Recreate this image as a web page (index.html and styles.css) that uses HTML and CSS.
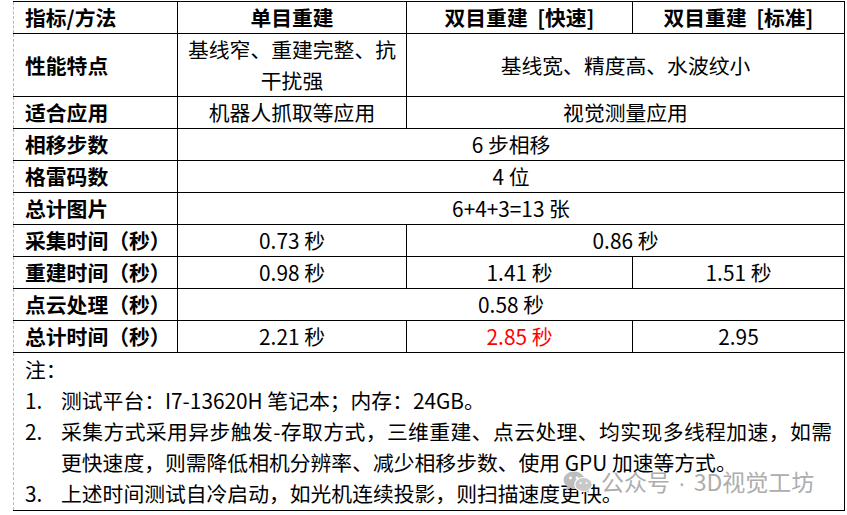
FILE: index.html
```html
<!DOCTYPE html>
<html lang="zh-CN">
<head>
<meta charset="utf-8">
<title>重建方法对比</title>
<link rel="stylesheet" href="styles.css">
</head>
<body>
<div class="sheet">
  <table class="grid">
    <colgroup>
      <col class="c1"><col class="c2"><col class="c3"><col class="c4">
    </colgroup>
    <tr class="row">
      <th class="label">指标/方法</th>
      <th>单目重建</th>
      <th>双目重建&nbsp;&nbsp;[快速]</th>
      <th>双目重建&nbsp;&nbsp;[标准]</th>
    </tr>
    <tr>
      <th class="label">性能特点</th>
      <td>基线窄、重建完整、抗干扰强</td>
      <td colspan="2">基线宽、精度高、水波纹小</td>
    </tr>
    <tr class="row">
      <th class="label">适合应用</th>
      <td>机器人抓取等应用</td>
      <td colspan="2">视觉测量应用</td>
    </tr>
    <tr class="row">
      <th class="label">相移步数</th>
      <td colspan="3">6 步相移</td>
    </tr>
    <tr class="row">
      <th class="label">格雷码数</th>
      <td colspan="3">4 位</td>
    </tr>
    <tr class="row">
      <th class="label">总计图片</th>
      <td colspan="3">6+4+3=13 张</td>
    </tr>
    <tr class="row">
      <th class="label">采集时间（秒）</th>
      <td>0.73 秒</td>
      <td colspan="2">0.86 秒</td>
    </tr>
    <tr class="row">
      <th class="label">重建时间（秒）</th>
      <td>0.98 秒</td>
      <td>1.41 秒</td>
      <td>1.51 秒</td>
    </tr>
    <tr class="row">
      <th class="label">点云处理（秒）</th>
      <td colspan="3">0.58 秒</td>
    </tr>
    <tr class="row">
      <th class="label">总计时间（秒）</th>
      <td>2.21 秒</td>
      <td class="hot">2.85 秒</td>
      <td>2.95</td>
    </tr>
    <tr>
      <td colspan="4" class="notes">
        <div class="note-title">注：</div>
        <div class="note"><span class="num">1.</span><div class="body">测试平台：I7-13620H 笔记本；内存：24GB。</div></div>
        <div class="note"><span class="num">2.</span><div class="body"><span class="just">采集方式采用异步触发-存取方式，三维重建、点云处理、均实现多线程加速，如需</span><span class="line">更快速度，则需降低相机分辨率、减少相移步数、使用 GPU 加速等方式。</span></div></div>
        <div class="note"><span class="num">3.</span><div class="body">上述时间测试自冷启动，如光机连续投影，则扫描速度更快。</div></div>
      </td>
    </tr>
  </table>
  <div class="watermark">
    <svg class="wm-icon" width="30" height="22" viewBox="0 0 30 22">
      <ellipse cx="11" cy="9" rx="10.5" ry="8.5" fill="#bdbdbd"/>
      <path d="M4 15 L3 20 L8 16.5 Z" fill="#bdbdbd"/>
      <circle cx="7.5" cy="7" r="1.4" fill="#fff"/>
      <circle cx="14" cy="7" r="1.4" fill="#fff"/>
      <ellipse cx="20.5" cy="13.5" rx="8.8" ry="7" fill="#c9c9c9" stroke="#fff" stroke-width="1.2"/>
      <path d="M25 19 L27 22 L22.5 20 Z" fill="#c9c9c9"/>
      <circle cx="17.5" cy="12" r="1.1" fill="#fff"/>
      <circle cx="23.5" cy="12" r="1.1" fill="#fff"/>
    </svg>
    <span class="wm-text">公众号<span class="wm-dot">·</span>3D视觉工坊</span>
  </div>
</div>
</body>
</html>
```
FILE: styles.css
```css
html, body {
  margin: 0;
  padding: 0;
  background: #ffffff;
}

body {
  font-family: "Noto Sans CJK SC", "Liberation Sans", sans-serif;
  color: #000000;
  font-size: 20.8px;
}

.sheet {
  position: relative;
  width: 847px;
  height: 515px;
  padding: 1px 0 0 13px;
  box-sizing: border-box;
}

.grid {
  border-collapse: collapse;
  table-layout: fixed;
  width: 831px;
}

.c1 { width: 164px; }
.c2 { width: 229px; }
.c3 { width: 226px; }
.c4 { width: 212px; }

.grid th,
.grid td {
  border: 1px solid #000000;
  padding: 0;
  line-height: 31px;
  text-align: center;
  vertical-align: middle;
  font-weight: 400;
}

.grid th {
  font-weight: 700;
}

.grid .label {
  text-align: left;
  padding-left: 11px;
  border-left: 1px dashed #b8b8b8;
}

.grid .hot {
  color: #ff0000;
}

.grid .notes {
  text-align: left;
  vertical-align: top;
  padding: 1px 0 1px 11px;
  border-left: 1px dashed #b8b8b8;
}

.note-title {
  line-height: 31px;
}

.note {
  display: flex;
  line-height: 31px;
}

.num {
  width: 36px;
  flex: none;
}

.body {
  flex: 1;
  padding-right: 12px;
}

.just {
  display: block;
  text-align: justify;
  text-align-last: justify;
}

.line {
  display: block;
}

.watermark {
  position: absolute;
  left: 563px;
  top: 470px;
  display: flex;
  align-items: center;
  gap: 8px;
  color: #adadad;
  font-size: 23px;
  line-height: 22px;
}

.wm-icon {
  flex: none;
}

.wm-dot {
  font-family: "Liberation Sans", sans-serif;
  padding: 0 8px;
}
```
